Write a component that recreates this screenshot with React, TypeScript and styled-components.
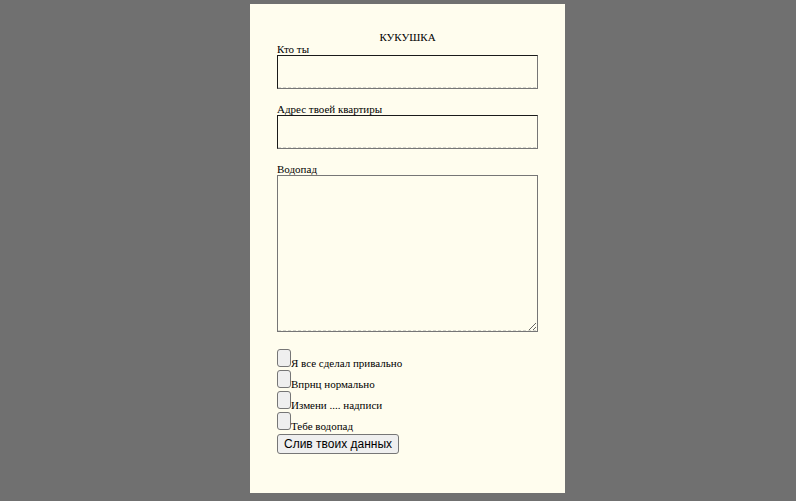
import React from "react";
import styled, { createGlobalStyle } from "styled-components";

const Global = createGlobalStyle`
  html, body {
    margin: 0;
    padding: 0;
    background: #707070;
  }
  body {
    padding: 4px 0 0 19px;
    font-family: "Liberation Serif", "Times New Roman", serif;
  }
`;

const Card = styled.form`
  box-sizing: border-box;
  width: 315px;
  height: 489px;
  margin: 0 auto;
  padding: 27px 27px 0 27px;
  background: #fffdee;
  color: #000;
  font-family: "Liberation Serif", "Times New Roman", serif;
  font-size: 11px;
  display: flex;
  flex-direction: column;
`;

const Title = styled.div`
  text-align: center;
  line-height: 12px;
`;

const FieldLabel = styled.label<{ $gap?: number }>`
  display: block;
  line-height: 12px;
  margin-top: ${(p) => p.$gap ?? 0}px;
`;

const dashed = `
  background-color: transparent;
  background-image: repeating-linear-gradient(to right, #d6d6cc 0 3px, transparent 3px 5px);
  background-size: 100% 1px;
  background-position: left bottom;
  background-repeat: no-repeat;
`;

const TextInput = styled.input`
  box-sizing: border-box;
  display: block;
  width: 261px;
  height: 34px;
  margin: 0;
  padding: 0 2px;
  border: 1px solid #767676;
  border-top-color: #1a1a1a;
  border-left-color: #1a1a1a;
  outline: none;
  ${dashed}
`;

const TextArea = styled.textarea`
  box-sizing: border-box;
  display: block;
  width: 261px;
  height: 157px;
  margin: 0;
  padding: 2px;
  border: 1px solid #767676;
  outline: none;
  ${dashed}
`;

const Checks = styled.div`
  margin-top: 14px;
  display: flex;
  flex-direction: column;
`;

const CheckRow = styled.div`
  display: flex;
  align-items: flex-end;
  height: 21px;
`;

const Box = styled.input`
  appearance: none;
  -webkit-appearance: none;
  box-sizing: border-box;
  width: 14px;
  height: 18px;
  margin: 0;
  border: 1px solid #767676;
  border-radius: 3px;
  background: #efefef;
`;

const CheckText = styled.label`
  line-height: 12px;
  margin-bottom: -2px;
`;

const Submit = styled.button`
  align-self: flex-start;
  margin-top: 4px;
  height: 20px;
  padding: 0 6px;
  border: 1px solid #767676;
  border-radius: 3px;
  background: #efefef;
  color: #000;
  font-family: "Liberation Sans", Arial, sans-serif;
  font-size: 12px;
  line-height: 16px;
`;

const checks = [
  "Я все сделал привально",
  "Впрнц нормально",
  "Измени .... надписи",
  "Тебе водопад",
];

export default function App() {
  return (
    <>
      <Global />
      <Card onSubmit={(e) => e.preventDefault()}>
        <Title>КУКУШКА</Title>
        <FieldLabel htmlFor="who">Кто ты</FieldLabel>
        <TextInput id="who" type="text" />
        <FieldLabel htmlFor="addr" $gap={14}>Адрес твоей квартиры</FieldLabel>
        <TextInput id="addr" type="text" />
        <FieldLabel htmlFor="fall" $gap={14}>Водопад</FieldLabel>
        <TextArea id="fall" />
        <Checks>
          {checks.map((c, i) => (
            <CheckRow key={i}>
              <Box type="checkbox" id={`c${i}`} />
              <CheckText htmlFor={`c${i}`}>{c}</CheckText>
            </CheckRow>
          ))}
        </Checks>
        <Submit type="submit">Слив твоих данных</Submit>
      </Card>
    </>
  );
}
